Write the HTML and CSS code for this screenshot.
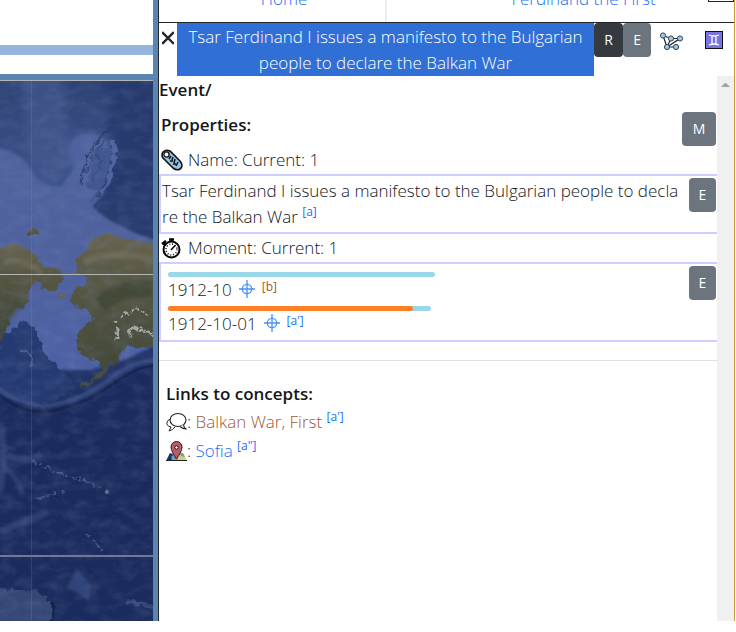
FILE: index.html
```html
<!DOCTYPE html>
<html lang="en">

<head>
  <meta charset="UTF-8">
  <meta name="viewport" content="width=device-width, initial-scale=1.0">
  <title>Tsar Ferdinand I issues a manifesto</title>
  <link rel="stylesheet" href="styles.css">
</head>

<body>
  <div class="app">
    <div class="left">
      <div class="timeline">
        <div class="band"></div>
      </div>
      <div class="map">
        <svg viewBox="0 0 153 541" preserveAspectRatio="xMinYMin slice">
          <defs>
            <linearGradient id="sea" x1="0" y1="0" x2="0" y2="1">
              <stop offset="0" stop-color="#304376"/>
              <stop offset=".22" stop-color="#3d528d"/>
              <stop offset=".5" stop-color="#26386d"/>
              <stop offset=".62" stop-color="#1c2d5e"/>
              <stop offset="1" stop-color="#1d2d5c"/>
            </linearGradient>
            <linearGradient id="shelf" x1="0" y1="0" x2="0" y2="1">
              <stop offset="0" stop-color="#50639a"/>
              <stop offset="1" stop-color="#4d60a3"/>
            </linearGradient>
            <linearGradient id="land" x1="0" y1="0" x2="0" y2="1">
              <stop offset="0" stop-color="#66634f"/>
              <stop offset=".4" stop-color="#545442"/>
              <stop offset="1" stop-color="#3f4636"/>
            </linearGradient>
            <filter id="soft" x="-20%" y="-20%" width="140%" height="140%" color-interpolation-filters="sRGB"><feGaussianBlur stdDeviation="5"/></filter>
            <filter id="blur" x="-20%" y="-20%" width="140%" height="140%" color-interpolation-filters="sRGB"><feGaussianBlur stdDeviation="1.500"/></filter>
            <filter id="edge" x="-20%" y="-20%" width="140%" height="140%" color-interpolation-filters="sRGB">
              <feTurbulence type="fractalNoise" baseFrequency=".15" numOctaves="3" seed="4" result="noise"/>
              <feDisplacementMap in="SourceGraphic" in2="noise" xChannelSelector="R" yChannelSelector="G" scale="8"/>
              <feGaussianBlur stdDeviation=".6"/>
            </filter>
            <filter id="grain" x="0" y="0" width="100%" height="100%" color-interpolation-filters="sRGB">
              <feTurbulence type="fractalNoise" baseFrequency=".06 .1" numOctaves="4" seed="8"/>
              <feColorMatrix values="0 0 0 0 .5  0 0 0 0 .58  0 0 0 0 .75  1.500 0 0 0 -.6"/>
            </filter>
          </defs>
          <rect width="153" height="541" fill="url(#sea)"/>
          <path d="M104 0H170V170Q118 156 92 134Q112 90 114 58Q106 48 112 24Z" fill="#27396d" filter="url(#soft)"/>
          <path d="M22 -8H62L70 62L66 98L40 108L26 70Z" fill="#485b91" opacity=".6" filter="url(#soft)"/>
          <path d="M-20 66Q20 66 32 92Q42 108 62 106L76 84Q64 62 80 56Q98 50 110 66Q112 96 90 122Q120 150 170 164V250Q150 275 90 290H-20Z" fill="url(#shelf)" filter="url(#blur)"/>
          <path d="M70 84Q60 62 80 55Q96 50 108 60L94 64L82 90Z" fill="#5063a0" filter="url(#soft)"/>
          <g fill="none" filter="url(#edge)">
            <path d="M110 48Q96 60 88 74Q84 90 80 104" stroke="#2b3d72" stroke-width="2"/>
            <path d="M113 60Q117 80 105 109Q99 121 90 124" stroke="#5062a0" stroke-width="4"/>
            <path d="M104 68L99 86L93 108" stroke="#42568f" stroke-width="15"/>
            <path d="M94 64L92 78L86 93M104 60L97 74L101 82L92 101" stroke="#364a80" stroke-width="2"/>
          </g>
          <path d="M93 126Q110 147 170 164V110Q130 110 108 108Z" fill="#293b6f" filter="url(#blur)"/>
          <path d="M0 258L24 240L33 247L47 277L66 295L74 307L52 322L26 323L-8 313Z" fill="#263a72" filter="url(#edge)"/>
          <path d="M-6 313Q12 334 40 336Q76 334 112 309Q130 291 160 286V550H-8Z" fill="#1b2b5d" filter="url(#blur)"/>
          <path d="M-4 307Q16 323 42 326Q76 324 109 300Q128 282 156 280" fill="none" stroke="#3f528a" stroke-width="3" filter="url(#blur)"/>
          <path d="M0 315Q20 332 42 332Q78 329 112 305Q133 288 156 285" fill="none" stroke="#14234b" stroke-width="3" opacity=".8"/>
          <g fill="url(#land)" filter="url(#edge)">
            <path d="M-5 171Q8 160 22 167L34 175L47 188L58 190L64 199L57 207L49 212L37 203L30 207L29 224L15 230L0 263H-5Z"/>
            <path d="M76 178L86 171L90 160L104 154L165 165V265L139 269L128 265L112 280L105 295L95 300L80 309L83 304L102 290L99 282L80 274L75 261L80 249L93 239L88 228L74 226L70 218L77 207L88 201L76 191Z"/>
            <ellipse cx="33" cy="152" rx="6" ry="4"/>
            <path d="M56 214L66 217V220L58 218ZM111 278L121 270L119 283L112 286Z"/>
          </g>
          <g fill="none" filter="url(#blur)">
            <path d="M84 182Q112 168 153 180" stroke="#77705a" stroke-width="7" opacity=".6"/>
            <path d="M4 182Q24 176 42 194" stroke="#7a735f" stroke-width="6" opacity=".5"/>
            <path d="M100 225Q120 205 153 210" stroke="#384230" stroke-width="16" opacity=".6"/>
            <path d="M0 245L20 222" stroke="#3f4936" stroke-width="10" opacity=".5"/>
          </g>
          <g fill="none" stroke="#a3aaa3" filter="url(#edge)">
            <path d="M116 243L126 233L137 229L149 236" stroke-width="2" stroke-dasharray="4 2"/>
            <path d="M117 247V259M128 256L134 247L149 252L156 256" stroke-width="3" stroke-dasharray="7 1"/>
          </g>
          <g fill="none" stroke="#3a4e80" filter="url(#blur)">
            <path d="M0 343Q6 365 0 411M8 376Q30 384 42 374M0 452Q21 442 48 432" stroke-width="7" opacity=".6"/>
            <path d="M4 386Q20 400 22 416" stroke-width="5" opacity=".5"/>
          </g>
          <path d="M20 270Q36 270 31 288" fill="none" stroke="#4c5d90" stroke-width="2" filter="url(#edge)"/>
          <path d="M32 380L53 391L86 401L108 412M39 419L53 414L66 411M86 454L104 472" fill="none" stroke="#5b6c94" stroke-width="2" stroke-dasharray="6 3 3 2" opacity=".6" filter="url(#edge)"/>
          <circle cx="107" cy="412" r="2" fill="#74808c" opacity=".8"/>
          <path d="M-5 507Q20 512 36 511L51 523V546H-5Z" fill="#354775" filter="url(#edge)"/>
          <path d="M50 522L55 529L51 541" fill="none" stroke="#121f43" stroke-width="3" filter="url(#edge)"/>
          <path d="M77 489L91 505L89 520L78 513L66 508Z" fill="#304479" filter="url(#blur)"/>
          <path d="M128 520L153 528" fill="none" stroke="#465a88" stroke-width="4" opacity=".6" filter="url(#edge)"/>
          <path d="M100 382Q126 377 153 372M94 407Q122 406 153 400M100 435L153 428M33 400L67 423" fill="none" stroke="#17264f" stroke-width="1" filter="url(#edge)"/>
          <rect width="153" height="541" filter="url(#grain)" opacity=".24"/>
          <path d="M31.500 0V541" stroke="#8291ad" stroke-width="1" opacity=".22"/>
          <path d="M0 .5H153M0 194.500H153" stroke="#b4b5b5" stroke-width="1"/>
          <path d="M0 476H153" stroke="#6f7992" stroke-width="2"/>
        </svg>
      </div>
    </div>
    <div class="panel">
      <nav class="tabs">
        <a class="tab tab-home" href="#">Home</a>
        <a class="tab tab-current" href="#">Ferdinand the First</a>
        <span class="tab-box"></span>
      </nav>
      <header class="head">
        <button class="close" aria-label="Close">
          <svg width="12" height="14" viewBox="0 0 12 14"><path d="M1 2L11 12M11 2L1 12" stroke="#212529" stroke-width="2.400" stroke-linecap="square"/></svg>
        </button>
        <h1 class="title">Tsar Ferdinand I issues a manifesto to the Bulgarian people to declare the Balkan War</h1>
        <button class="btn btn-dark">R</button>
        <button class="btn btn-head">E</button>
        <button class="tool graph" aria-label="Graph">
          <svg width="24" height="20" viewBox="0 0 24 20">
            <path d="M3 4.500L11 7.500L20 7.500L7 16L3 4.500M11 7.500L7 16L16 16" fill="none" stroke="#222" stroke-width="1.200"/>
            <g fill="#98c8ec" stroke="#334656" stroke-width="1"><circle cx="3" cy="4.500" r="2.600"/><circle cx="11" cy="7.500" r="2.600"/><circle cx="20" cy="7.500" r="2.600"/><circle cx="7" cy="16" r="2.600"/><circle cx="16" cy="16" r="2.600"/></g>
          </svg>
        </button>
        <button class="tool" aria-label="Twins">
          <svg width="18" height="18" viewBox="0 0 18 18">
            <rect x=".5" y=".5" width="17" height="17" fill="#7b73df" stroke="#111"/>
            <path d="M4 4Q9 6 14 4M4 14Q9 12 14 14M7 5V13M11 5V13" fill="none" stroke="#fff" stroke-width="1.300"/>
          </svg>
        </button>
      </header>
      <main class="scroll">
        <div class="content">
          <div class="type">Event/</div>
          <div class="section">
            <h2>Properties:</h2>
            <button class="btn btn-wide">M</button>
          </div>
          <div class="prop">
            <svg class="icon" width="22" height="22" viewBox="0 0 22 22">
              <path d="M2 3Q5 0 9 2L19 12Q23 17 19 20Q16 22 12 19L2 9Q0 6 2 3Z" fill="#8fc3e8" stroke="#111" stroke-width="1.600"/>
              <circle cx="5.500" cy="5.500" r="2.600" fill="#fff" stroke="#111" stroke-width="1.300"/>
              <path d="M10 7L8 10M12 8L11 11M9 12L12 12M14 10L13 14M12 15L15 15M17 13L15 17" stroke="#111" stroke-width="1.500"/>
            </svg>
            <span>Name: Current: 1</span>
          </div>
          <div class="box">
            <p class="value">Tsar Ferdinand I issues a manifesto to the Bulgarian people to declare the Balkan War <sup><a href="#">[a]</a></sup></p>
            <button class="btn">E</button>
          </div>
          <div class="prop">
            <svg class="icon" width="22" height="22" viewBox="0 0 22 22">
              <circle cx="10.500" cy="12.500" r="8" fill="#fff" stroke="#000" stroke-width="2"/>
              <path d="M8 2.500H13M10.500 2V5M2 5L5 8M1 7L5 4" stroke="#000" stroke-width="2.500"/>
              <path d="M10 13L14 8.500" stroke="#000" stroke-width="1.500"/>
              <circle cx="10.500" cy="12.500" r="5.500" fill="none" stroke="#000" stroke-width="1.500" stroke-dasharray="1 1.880"/>
            </svg>
            <span>Moment: Current: 1</span>
          </div>
          <div class="box box-moment">
            <div class="moments">
              <div class="bar"></div>
              <div class="date">
                <span>1912-10</span>
                <svg width="16" height="18" viewBox="0 0 16 18"><path d="M8 0V18M0 9H16" stroke="#4a90f7" stroke-width="1.300"/><circle cx="8" cy="9" r="4.700" fill="none" stroke="#4a90f7" stroke-width="1.300"/></svg>
                <sup><a class="brown" href="#">[b]</a></sup>
              </div>
              <div class="bar bar-day"><div class="fill"></div></div>
              <div class="date">
                <span>1912-10-01</span>
                <svg width="16" height="18" viewBox="0 0 16 18"><path d="M8 0V18M0 9H16" stroke="#4a90f7" stroke-width="1.300"/><circle cx="8" cy="9" r="4.700" fill="none" stroke="#4a90f7" stroke-width="1.300"/></svg>
                <sup><a href="#">[a']</a></sup>
              </div>
            </div>
            <button class="btn">E</button>
          </div>
          <hr>
          <section class="links">
            <h2>Links to concepts:</h2>
            <div class="link">
              <svg class="icon" width="21" height="20" viewBox="0 0 21 20">
                <path d="M5 15Q0 14 1 10Q2 7 6 7M5 15Q4 17 3 19Q7 18 9 15" fill="none" stroke="#222" stroke-width="1"/>
                <ellipse cx="12" cy="8" rx="8" ry="6.500" fill="#fff" stroke="#222" stroke-width="1.100"/>
                <path d="M14 14.500Q17 17 20 17Q17 15 18 12.500" fill="#fff" stroke="#222" stroke-width="1.100"/>
              </svg>
              <span>: <a class="brown" href="#">Balkan War, First</a> <sup><a href="#">[a']</a></sup></span>
            </div>
            <div class="link">
              <svg class="icon" width="21" height="20" viewBox="0 0 21 20">
                <path d="M4 12H17L21 20H0Z" fill="#dccb7c"/>
                <path d="M4 12L8 14L5 20H0Z" fill="#242b7d"/>
                <path d="M8 13L13 20H7L5 16ZM14 12H17L19 16L15 15Z" fill="#6da1ac"/>
                <path d="M10.500 18Q5 10 5 6A5.500 5.500 0 0 1 16 6Q16 10 10.500 18Z" fill="#bd5968" stroke="#2b2227" stroke-width="1"/>
                <circle cx="10.500" cy="6.500" r="1.700" fill="#fff" stroke="#111"/>
                <path d="M0 19.500H21" stroke="#222"/>
              </svg>
              <span>: <a href="#">Sofia</a> <sup><a href="#">[a"]</a></sup></span>
            </div>
          </section>
        </div>
        <div class="scrollbar"><span class="arrow"></span></div>
      </main>
    </div>
  </div>
</body>

</html>
```
FILE: styles.css
```css
* {
  box-sizing: border-box;
}

body {
  margin: 0;
  background: #fff;
  color: #14171a;
  font-family: "Open Sans", "Noto Sans", sans-serif;
  font-size: 17px;
  font-weight: 300;
  line-height: 26px;
}

a {
  color: #1a70f5;
  text-decoration: none;
}

.brown {
  color: #9c5833;
}

button {
  font: inherit;
  border: 0;
  padding: 0;
  cursor: pointer;
}

h1,
h2,
p {
  margin: 0;
  font-size: 17px;
}

h2 {
  font-weight: 600;
}

svg {
  display: block;
}

.app {
  display: flex;
  height: calc(100vh - 11px);
  margin-right: 1px;
}

/* map side */
.left {
  display: flex;
  flex-direction: column;
  width: 21.500%;
  border-right: 5px solid #5b84b3;
}

.timeline {
  height: 80px;
  padding-top: 45px;
  border-bottom: 6px solid #5b84b3;
}

.band {
  height: 10px;
  background: #95b4de;
}

.map {
  flex: 1;
  min-height: 0;
  background: #1d2d5c;
}

.map svg {
  width: 100%;
  height: 100%;
}

/* panel side */
.panel {
  display: flex;
  flex-direction: column;
  flex: 1;
  min-width: 0;
  border-left: 1px solid #212529;
  border-right: 1px solid #c89a3c;
}

.tabs {
  position: relative;
  display: flex;
  align-items: flex-end;
  height: 23px;
  overflow: hidden;
  border-bottom: 1px solid #212529;
}

.tab {
  height: 36px;
  text-align: center;
}

.tab-home {
  width: 228px;
  padding-left: 24px;
  border-right: 2px solid #eee;
}

.tab-current {
  flex: 1;
  margin-right: -46px;
}

.tab-box {
  position: absolute;
  top: -16px;
  right: 0;
  width: 26px;
  height: 18px;
  border: 1px solid #212529;
}

.head {
  display: flex;
  align-items: flex-start;
}

.close {
  width: 18px;
  padding: 8px 3px;
  background: none;
}

.title {
  width: 417px;
  height: 53px;
  padding-top: 1px;
  background: #306fd6;
  color: #fff;
  font-weight: 300;
  text-align: center;
}

.btn {
  flex: none;
  width: 27px;
  height: 34px;
  border-radius: 4px;
  background: #6c757d;
  color: #fff;
  font-size: 14px;
  font-weight: 400;
}

.btn-dark {
  width: 29px;
  background: #343a40;
}

.btn-head {
  width: 28px;
}

.btn-wide {
  width: 34px;
}

.tool {
  margin-top: 8px;
  margin-left: auto;
  margin-right: 11px;
  background: none;
}

.graph {
  margin-left: 9px;
  margin-right: 0;
}

.scroll {
  display: flex;
  flex: 1;
  min-height: 0;
}

.content {
  flex: 1;
  min-width: 0;
  padding-top: 1px;
}

.scrollbar {
  width: 17px;
  padding: 7px 4px;
  background: #f0f0f0;
}

.arrow {
  display: block;
  border: 4px solid transparent;
  border-top: 0;
  border-bottom: 4px solid #a3a3a3;
}

.type {
  font-weight: 600;
}

.section {
  display: flex;
  justify-content: space-between;
  padding: 9px 1px 0 2px;
}

.prop {
  display: flex;
  align-items: center;
  gap: 5px;
  height: 28px;
  padding-left: 2px;
}

.box {
  display: flex;
  align-items: flex-start;
  justify-content: space-between;
  padding: 2px 1px;
  border: 2px solid #cfcfff;
  border-right: 0;
}

.value {
  flex: 1;
  padding-right: 6px;
  word-break: break-all;
}

sup {
  font-size: 12px;
  font-weight: 400;
  line-height: 0;
}

.moments {
  padding: 6px 0 0 6px;
}

.box-moment {
  padding-bottom: 0;
}

.bar {
  width: 267px;
  height: 5px;
  border-radius: 3px;
  background: #98d8e8;
}

.bar-day {
  width: 263px;
}

.fill {
  width: 93%;
  height: 5px;
  border-radius: 3px;
  background: #ff7f27;
}

.date {
  display: flex;
  align-items: flex-start;
  gap: 7px;
  height: 29px;
}

.date svg {
  margin-top: 3px;
}

.date sup {
  line-height: 20px;
}

hr {
  height: 1px;
  margin: 18px 0 20px;
  border: 0;
  background: #e2e2e2;
}

.links {
  padding-left: 7px;
}

.link {
  display: flex;
  align-items: center;
  height: 29px;
}
```
